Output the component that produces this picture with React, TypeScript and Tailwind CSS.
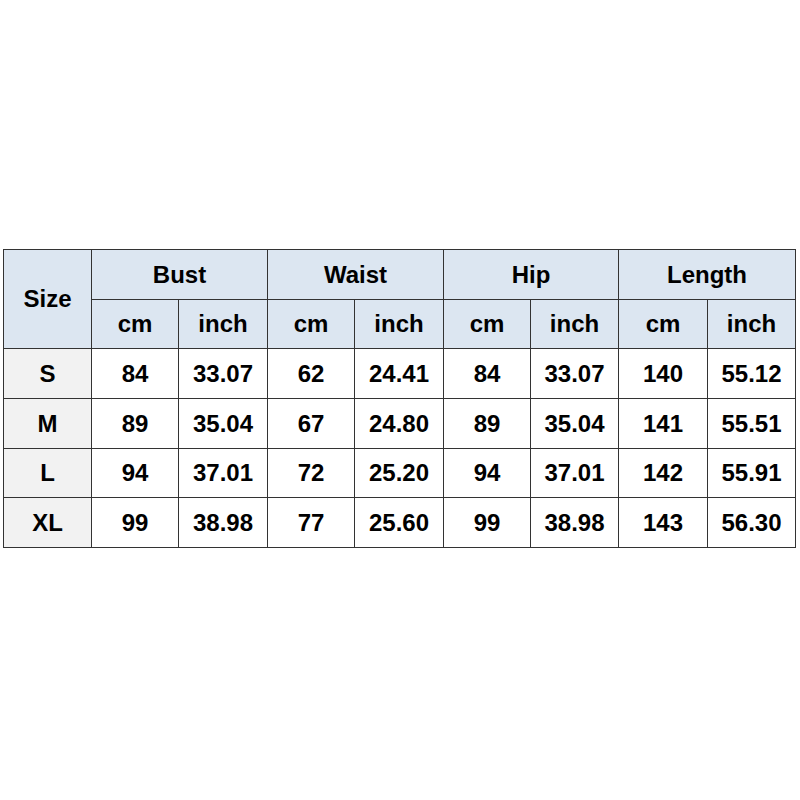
import React from "react";

const rows = [
  ["S", "84", "33.07", "62", "24.41", "84", "33.07", "140", "55.12"],
  ["M", "89", "35.04", "67", "24.80", "89", "35.04", "141", "55.51"],
  ["L", "94", "37.01", "72", "25.20", "94", "37.01", "142", "55.91"],
  ["XL", "99", "38.98", "77", "25.60", "99", "38.98", "143", "56.30"],
];

const widths = [88, 87, 89, 87, 89, 87, 88, 89, 88];

export default function App() {
  return (
    <div className="w-[800px] h-[800px] bg-white pt-[249px] pl-[3px]" style={{ fontFamily: '"Liberation Sans", Arial, sans-serif' }}>
      <table className="table-fixed border-collapse text-[24px] leading-none font-bold text-black w-[793px]">
        <colgroup>
          {widths.map((w, i) => (
            <col key={i} style={{ width: w }} />
          ))}
        </colgroup>
        <thead>
          <tr className="h-[50px]">
            <th rowSpan={2} className="border border-[#333] bg-[#dce6f1] text-center align-middle font-bold">Size</th>
            <th colSpan={2} className="border border-[#333] bg-[#dce6f1] text-center font-bold">Bust</th>
            <th colSpan={2} className="border border-[#333] bg-[#dce6f1] text-center font-bold">Waist</th>
            <th colSpan={2} className="border border-[#333] bg-[#dce6f1] text-center font-bold">Hip</th>
            <th colSpan={2} className="border border-[#333] bg-[#dce6f1] text-center font-bold">Length</th>
          </tr>
          <tr className="h-[49px]">
            {["cm", "inch", "cm", "inch", "cm", "inch", "cm", "inch"].map((t, i) => (
              <th key={i} className="border border-[#333] bg-[#dce6f1] text-center font-bold">{t}</th>
            ))}
          </tr>
        </thead>
        <tbody>
          {rows.map((r, ri) => (
            <tr key={ri} className={ri === 2 ? "h-[49px]" : "h-[50px]"}>
              {r.map((c, ci) => (
                <td key={ci} className={`border border-[#333] text-center ${ci === 0 ? "bg-[#f2f2f2]" : "bg-white"}`}>{c}</td>
              ))}
            </tr>
          ))}
        </tbody>
      </table>
    </div>
  );
}
